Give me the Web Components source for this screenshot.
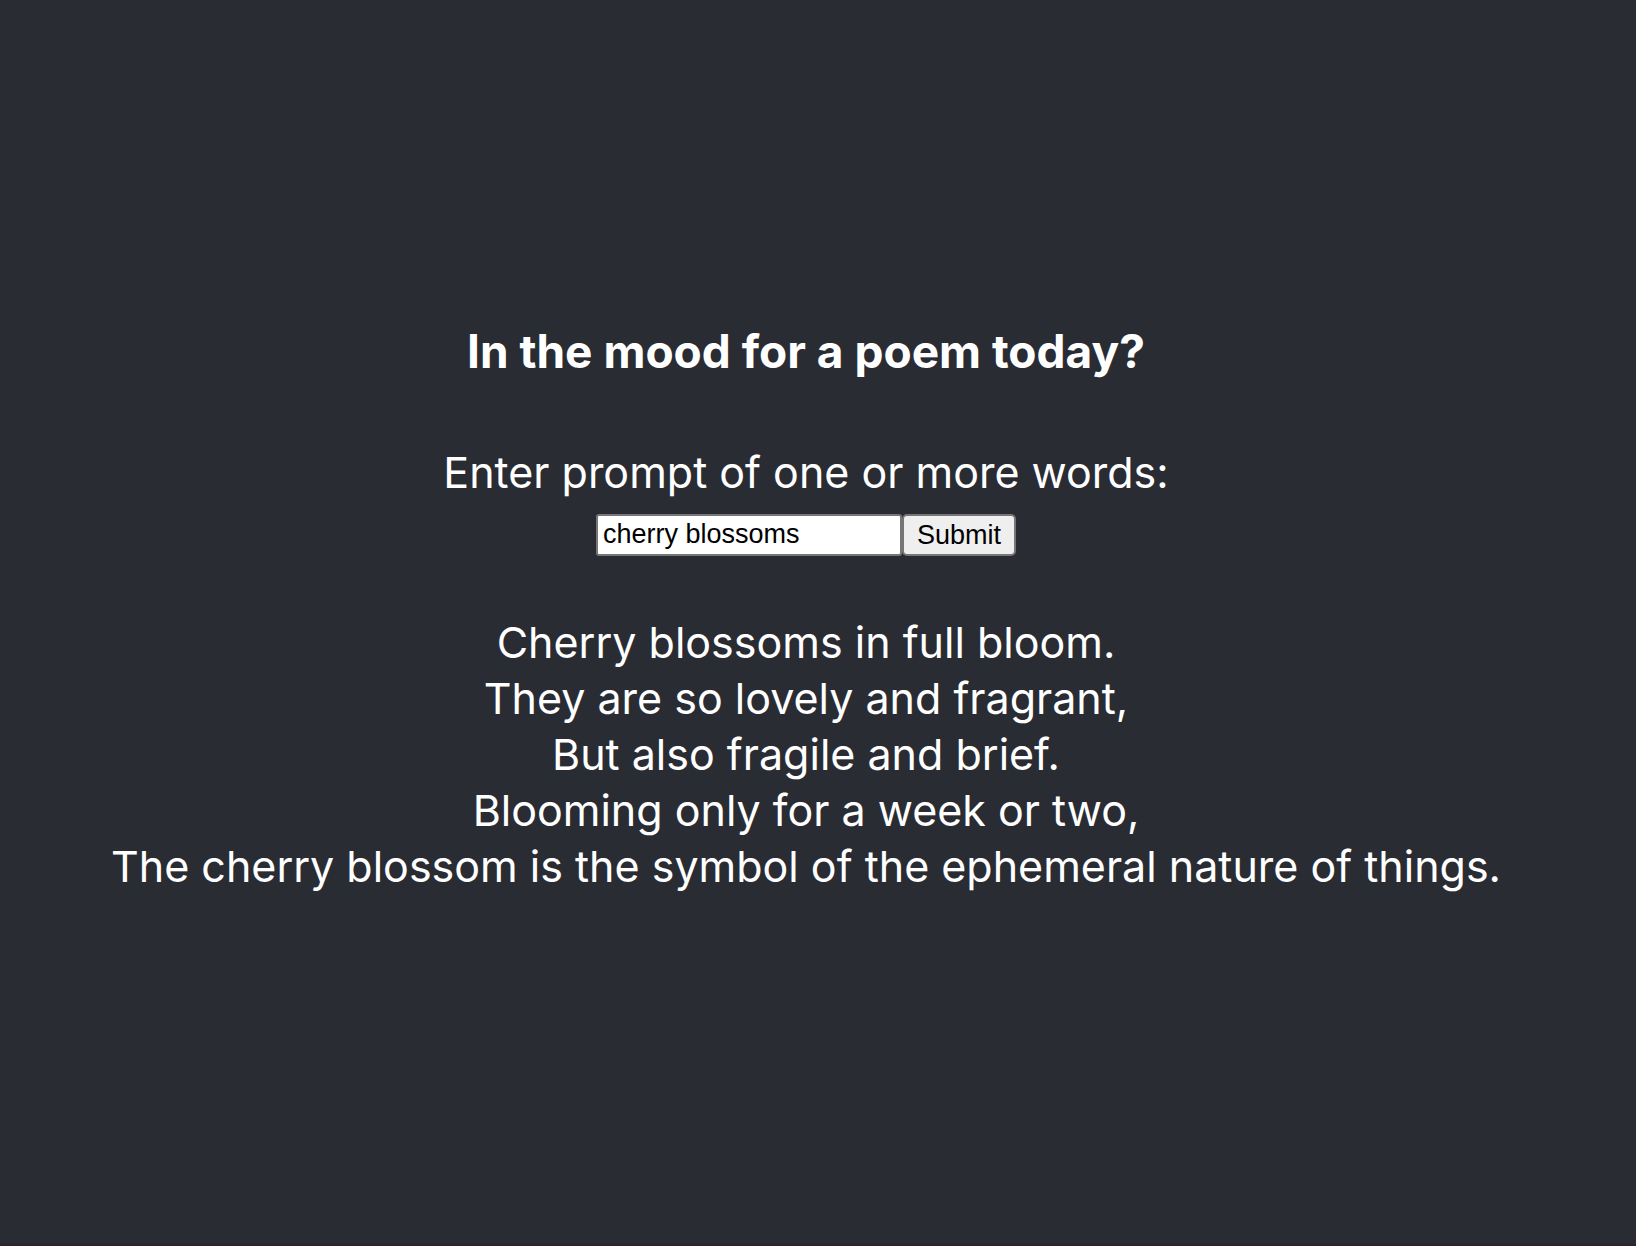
<!DOCTYPE html>
<html lang="en">
<head>
<meta charset="utf-8">
<title>Poem generator</title>
<style>
  body { margin: 0; background: #2a2c34; }
</style>
</head>
<body>
<poem-app>
  <poem-form slot="form" value="cherry blossoms"></poem-form>
  <poem-text slot="poem">Cherry blossoms in full bloom.
They are so lovely and fragrant,
But also fragile and brief.
Blooming only for a week or two,
The cherry blossom is the symbol of the ephemeral nature of things.</poem-text>
</poem-app>

<template id="poem-app">
  <style>
    :host {
      display: flex;
      flex-direction: column;
      align-items: center;
      justify-content: center;
      box-sizing: border-box;
      min-height: 100vh;
      padding: 0 24px 28px 0;
      border-bottom: 2px solid #30222d;
      background: #2a2c34;
      color: #fff;
      font: 43px/56px Inter, "Liberation Sans", sans-serif;
      text-align: center;
    }
    h1 { margin: 0 0 65px; font-size: 46px; line-height: 56px; font-weight: 700; }
  </style>
  <h1>In the mood for a poem today?</h1>
  <slot name="form"></slot>
  <slot name="poem"></slot>
</template>

<template id="poem-form">
  <style>
    :host { display: block; }
    form { display: flex; flex-direction: column; align-items: center; gap: 14px; margin: 0; }
    .row { display: flex; align-items: stretch; }
    input, button {
      box-sizing: border-box;
      height: 42px;
      margin: 0;
      border: 2px solid #767676;
      font: 27px/32px "Liberation Sans", Arial, sans-serif;
      color: #000;
    }
    input { width: 306px; padding: 2px 5px; background: #fff; border-radius: 3px; outline: none; }
    button { padding: 0 13px; background: #efefef; border-radius: 5px; }
  </style>
  <form>
    <label for="prompt">Enter prompt of one or more words:</label>
    <div class="row">
      <input id="prompt" type="text" autocomplete="off" spellcheck="false">
      <button type="submit">Submit</button>
    </div>
  </form>
</template>

<template id="poem-text">
  <style>
    :host { display: block; margin-top: 58px; }
    p { margin: 0; white-space: pre-line; }
  </style>
  <p><slot></slot></p>
</template>

<script>
  class TemplateElement extends HTMLElement {
    constructor() {
      super();
      const template = document.getElementById(this.localName);
      this.attachShadow({ mode: "open" }).append(template.content.cloneNode(true));
    }
  }
  class PoemApp extends TemplateElement {}
  class PoemText extends TemplateElement {}
  class PoemForm extends TemplateElement {
    connectedCallback() {
      this.shadowRoot.querySelector("input").value = this.getAttribute("value") || "";
      this.shadowRoot.querySelector("form").addEventListener("submit", (e) => e.preventDefault());
    }
  }
  customElements.define("poem-app", PoemApp);
  customElements.define("poem-form", PoemForm);
  customElements.define("poem-text", PoemText);
</script>
</body>
</html>
